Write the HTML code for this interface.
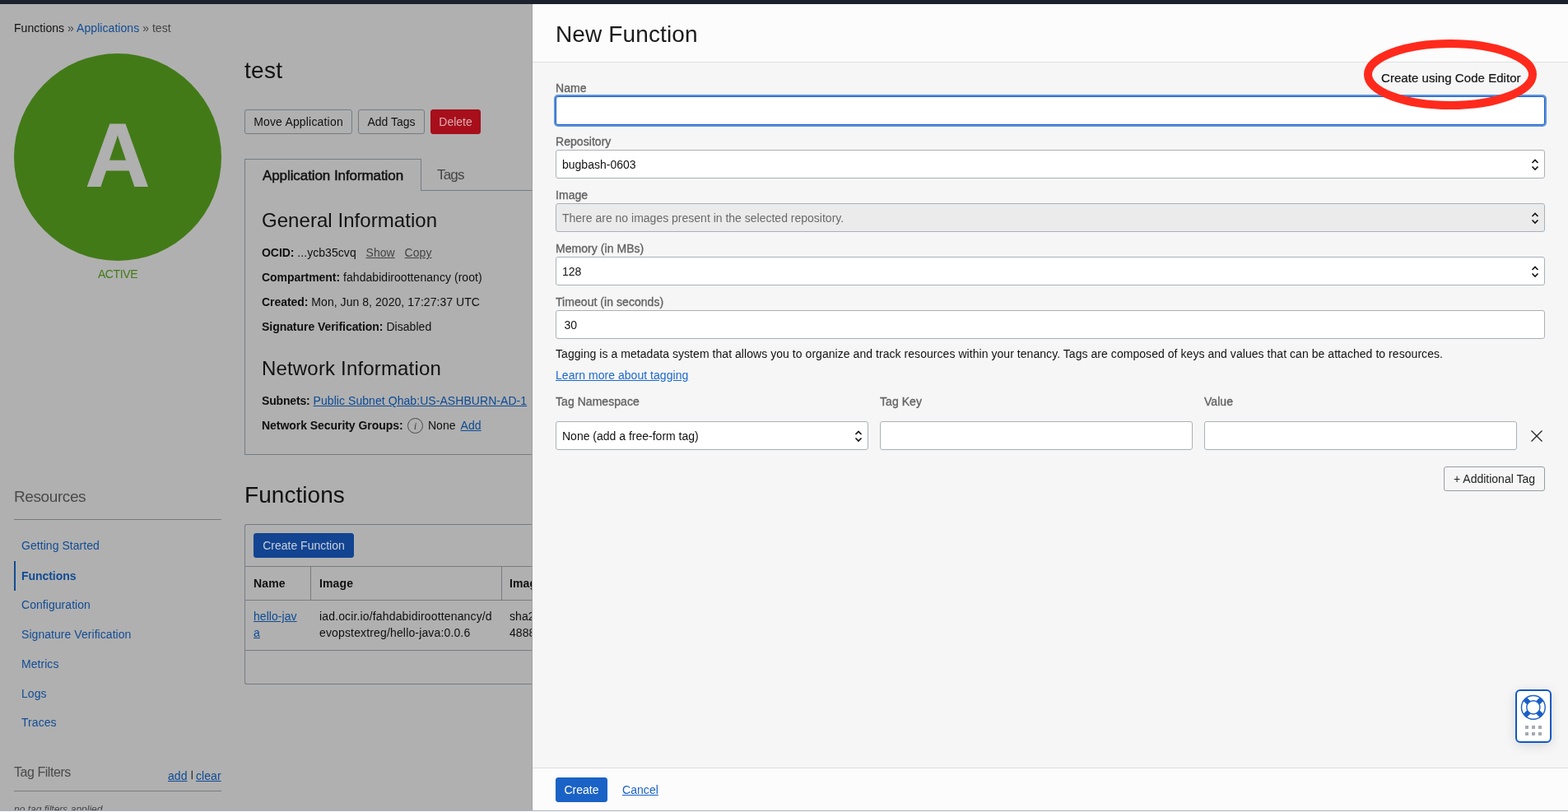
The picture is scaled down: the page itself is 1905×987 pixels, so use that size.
<!DOCTYPE html>
<html lang="en">
<head>
<meta charset="utf-8">
<title>New Function</title>
<style>
*{box-sizing:border-box;margin:0;padding:0}
html,body{width:1905px;height:987px;overflow:hidden;background:#fdfdfd}
body{position:relative;font-family:"Liberation Sans",Arial,Helvetica,sans-serif;font-size:14px;color:#0f0f0f;line-height:20px;letter-spacing:.05px}
.abs{position:absolute;white-space:nowrap}
.abs,.btn,.nav,.lbl,.fld{will-change:transform}
a{color:#0d4a93;text-decoration:underline}
#page{position:absolute;left:0;top:0;width:647px;height:985px;background:#b0b0b0;overflow:hidden}
#topbar{position:absolute;left:0;top:0;width:1905px;height:5px;background:#1c222d;z-index:5}
#bottomline{position:absolute;left:0;top:985px;width:1905px;height:1px;background:#adb1bb;z-index:5}
.btn{position:absolute;letter-spacing:0;height:30px;border:1px solid #767b82;border-radius:3px;background:#b0b0b0;color:#111;font-size:14px;line-height:28px;text-align:center;white-space:nowrap}
.h2{font-size:24px;line-height:28px;color:#111;font-weight:400}
.b{font-weight:700;letter-spacing:-.05px}
.nav{position:absolute;left:26px;color:#124c94;font-size:14px;white-space:nowrap}
#panel{position:absolute;left:647px;top:5px;width:1258px;height:980px;background:#f6f6f6;box-shadow:-1px 0 0 #a1a1a1}
#phead{position:absolute;left:0;top:0;width:100%;height:71px;background:#fcfcfc;border-bottom:1px solid #e1e1e1}
#pfoot{position:absolute;left:0;top:928px;width:100%;height:52px;background:#fcfcfc;border-top:1px solid #dedede}
.lbl{position:absolute;left:28px;font-size:14px;color:#626262;line-height:16px;white-space:nowrap;-webkit-text-stroke:.34px #626262;letter-spacing:.05px}
.fld{position:absolute;left:28px;width:1202px;height:35px;border:1px solid #aab0b9;border-radius:3px;background:#fff;font-size:14px;line-height:33px;padding:1px 0 0 7px;color:#111;white-space:nowrap;letter-spacing:0}
.chev{position:absolute;right:5px;top:8px;width:12px;height:18px}
</style>
</head>
<body>
<div id="page">
  <div class="abs" style="left:17px;top:24px;font-size:14px;color:#111">Functions <span style="color:#444">»</span> <span style="color:#124c94">Applications</span> <span style="color:#444">» test</span></div>
  <div class="abs" style="left:17px;top:65px;width:252px;height:252px;border-radius:50%;background:#437a18;color:#b0b0b0;font-weight:700;font-size:108.5px;line-height:248px;text-align:center;-webkit-text-stroke:1px #b0b0b0">A</div>
  <div class="abs" style="left:17px;top:323px;width:252px;text-align:center;color:#437a18;font-size:14px;letter-spacing:-.4px">ACTIVE</div>
  <div class="abs" style="left:297px;top:69px;font-size:28px;line-height:34px;color:#111;letter-spacing:.3px">test</div>
  <div class="btn" style="left:297px;top:133px;width:131px;letter-spacing:.18px">Move Application</div>
  <div class="btn" style="left:435px;top:133px;width:81px">Add Tags</div>
  <div class="btn" style="left:523px;top:133px;width:61px;background:#a70f1b;border-color:#a70f1b;color:#dcaeb2">Delete</div>

  <div class="abs" style="left:297px;top:231px;width:360px;height:322px;border:1px solid #767b82;border-right:0"></div>
  <div class="abs" style="left:297px;top:193px;width:215px;height:39px;border:1px solid #767b82;border-bottom:0;background:#b0b0b0;font-size:17px;line-height:40px;text-align:center;color:#111;-webkit-text-stroke:.45px #111;letter-spacing:-.08px">Application Information</div>
  <div class="abs" style="left:531px;top:203px;font-size:17px;color:#444;letter-spacing:-.8px">Tags</div>

  <div class="abs h2" style="left:318px;top:254px">General Information</div>
  <div class="abs" style="left:318px;top:297px"><span class="b">OCID:</span> ...ycb35cvq &nbsp; <a style="color:#444">Show</a> &nbsp; <a style="color:#444">Copy</a></div>
  <div class="abs" style="left:318px;top:327px"><span class="b">Compartment:</span> fahdabidiroottenancy (root)</div>
  <div class="abs" style="left:318px;top:357px"><span class="b">Created:</span> Mon, Jun 8, 2020, 17:27:37 UTC</div>
  <div class="abs" style="left:318px;top:387px"><span class="b">Signature Verification:</span> Disabled</div>
  <div class="abs h2" style="left:318px;top:434px;letter-spacing:.17px">Network Information</div>
  <div class="abs" style="left:318px;top:477px"><span class="b" style="letter-spacing:-.16px">Subnets:</span> <a style="letter-spacing:.06px">Public Subnet Qhab:US-ASHBURN-AD-1</a></div>
  <div class="abs" style="left:318px;top:507px"><span class="b">Network Security Groups:</span> <span style="display:inline-block;width:19px;height:19px;border:1px solid #4a4a4a;border-radius:50%;vertical-align:middle;text-align:center;line-height:17px;font-family:'Liberation Serif',serif;font-style:italic;font-size:13px;margin:-2px 2px 0 1.5px;color:#444">i</span> None <a style="margin-left:2px">Add</a></div>

  <div class="abs" style="left:17px;top:592px;font-size:19px;line-height:24px;color:#4a4a4a;letter-spacing:-.4px">Resources</div>
  <div class="abs" style="left:17px;top:631px;width:252px;height:1px;background:#767b82"></div>
  <div class="nav" style="top:653px">Getting Started</div>
  <div class="abs" style="left:17px;top:682px;width:2px;height:36px;background:#124c94"></div>
  <div class="nav b" style="top:690px">Functions</div>
  <div class="nav" style="top:725px">Configuration</div>
  <div class="nav" style="top:761px">Signature Verification</div>
  <div class="nav" style="top:797px">Metrics</div>
  <div class="nav" style="top:833px">Logs</div>
  <div class="nav" style="top:868px">Traces</div>
  <div class="abs" style="left:17px;top:928px;font-size:16px;line-height:22px;color:#4a4a4a;letter-spacing:-.45px">Tag Filters</div>
  <div class="abs" style="left:204px;top:933px;font-size:14px;color:#333"><a>add</a><span style="display:inline-block;width:10.5px;height:10px;line-height:10px;padding-left:1px;text-align:center;font-size:10.5px;position:relative;top:-3.2px;letter-spacing:0;color:#222;-webkit-text-stroke:.3px #222">|</span><a>clear</a></div>
  <div class="abs" style="left:17px;top:961px;width:252px;height:1px;background:#767b82"></div>
  <div class="abs" style="left:17px;top:974px;font-size:12px;font-style:italic;color:#444;letter-spacing:0">no tag filters applied</div>

  <div class="abs" style="left:297px;top:585px;font-size:28px;line-height:34px;color:#111">Functions</div>
  <div class="abs" style="left:297px;top:637px;width:360px;height:195px;border:1px solid #767b82;border-right:0;border-radius:3px 0 0 3px"></div>
  <div class="btn" style="left:308px;top:648px;width:122px;background:#124491;border-color:#124491;color:#c9d0dc">Create Function</div>
  <div class="abs" style="left:298px;top:688px;width:350px;height:1px;background:#767b82"></div>
  <div class="abs" style="left:298px;top:729px;width:350px;height:1px;background:#767b82"></div>
  <div class="abs" style="left:298px;top:790px;width:350px;height:1px;background:#767b82"></div>
  <div class="abs" style="left:377px;top:688px;width:1px;height:42px;background:#767b82"></div>
  <div class="abs" style="left:609px;top:688px;width:1px;height:42px;background:#767b82"></div>
  <div class="abs b" style="left:308px;top:699px;letter-spacing:.12px">Name</div>
  <div class="abs b" style="left:388px;top:699px;letter-spacing:.12px">Image</div>
  <div class="abs b" style="left:619px;top:699px;letter-spacing:.12px">Image Digest</div>
  <div class="abs" style="left:308px;top:739px"><a>hello-jav<br>a</a></div>
  <div class="abs" style="left:388px;top:739px;letter-spacing:.15px">iad.ocir.io/fahdabidiroottenancy/d<br>evopstextreg/hello-java:0.0.6</div>
  <div class="abs" style="left:619px;top:739px">sha256:<br>4888</div>
</div>

<div id="panel">
  <div id="phead"><div class="abs" style="left:28px;top:20px;font-size:28px;line-height:34px;color:#1a1a1a;letter-spacing:.12px">New Function</div></div>
  <div class="lbl" style="top:94px">Name</div>
  <div class="fld" style="top:112px;border-color:#1a5fc4;box-shadow:0 0 0 2px #5e94dc"></div>
  <div class="lbl" style="top:159px">Repository</div>
  <div class="fld" style="top:177px">bugbash-0603<svg class="chev" viewBox="0 0 12 18"><path d="M2.5 7 L6 3.5 L9.5 7 M2.5 11.5 L6 15 L9.5 11.5" fill="none" stroke="#111" stroke-width="1.6"/></svg></div>
  <div class="lbl" style="top:224px">Image</div>
  <div class="fld" style="top:242px;background:#ebebeb;color:#6a6a6a">There are no images present in the selected repository.<svg class="chev" viewBox="0 0 12 18"><path d="M2.5 7 L6 3.5 L9.5 7 M2.5 11.5 L6 15 L9.5 11.5" fill="none" stroke="#111" stroke-width="1.6"/></svg></div>
  <div class="lbl" style="top:289px">Memory (in MBs)</div>
  <div class="fld" style="top:307px">128<svg class="chev" viewBox="0 0 12 18"><path d="M2.5 7 L6 3.5 L9.5 7 M2.5 11.5 L6 15 L9.5 11.5" fill="none" stroke="#111" stroke-width="1.6"/></svg></div>
  <div class="lbl" style="top:354px">Timeout (in seconds)</div>
  <div class="fld" style="top:372px;padding-left:9.4px">30</div>
  <div class="abs" style="left:28px;top:415px;font-size:14px;color:#111">Tagging is a metadata system that allows you to organize and track resources within your tenancy. Tags are composed of keys and values that can be attached to resources.</div>
  <div class="abs" style="left:28px;top:441px;font-size:14px"><a style="color:#1b68ce;letter-spacing:.04px">Learn more about tagging</a></div>
  <div class="lbl" style="top:475px">Tag Namespace</div>
  <div class="lbl" style="top:475px;left:422px">Tag Key</div>
  <div class="lbl" style="top:475px;left:816px">Value</div>
  <div class="fld" style="top:507px;width:380px">None (add a free-form tag)<svg class="chev" viewBox="0 0 12 18"><path d="M2.5 7 L6 3.5 L9.5 7 M2.5 11.5 L6 15 L9.5 11.5" fill="none" stroke="#111" stroke-width="1.6"/></svg></div>
  <div class="fld" style="top:507px;left:422px;width:380px;height:35px"></div>
  <div class="fld" style="top:507px;left:816px;width:380px;height:35px"></div>
  <svg class="abs" style="left:1212px;top:517px" width="16" height="16" viewBox="0 0 16 16"><path d="M1.5 1.5 L14.5 14.5 M14.5 1.5 L1.5 14.5" stroke="#222" stroke-width="1.3" fill="none"/></svg>
  <div class="btn" style="left:1107px;top:562px;width:123px;background:#f6f6f6;border-color:#979da5;color:#222">+ Additional Tag</div>
  <div class="abs" style="left:1031px;top:80px;color:#111;font-size:15px;-webkit-text-stroke:.2px #111">Create using Code Editor</div>
  <svg class="abs" style="left:1000px;top:35px" width="230" height="100" viewBox="0 0 230 100"><ellipse cx="115" cy="50.5" rx="100" ry="37.5" fill="none" stroke="#ff2a1c" stroke-width="10"/></svg>
  <div class="abs" style="left:1194px;top:833px;width:44px;height:65px;border:2px solid #1059c2;border-radius:6px;background:#fff;box-shadow:0 3px 14px rgba(0,0,0,.13)">
    <svg width="40" height="61" viewBox="0 0 40 61" style="display:block">
      <defs><clipPath id="ring"><path clip-rule="evenodd" d="M19.85 5.2a14.65 14.65 0 1 0 0 29.3a14.65 14.65 0 1 0 0-29.3zM19.85 11.85a8 8 0 1 1 0 16a8 8 0 1 1 0-16z"/></clipPath></defs>
      <g clip-path="url(#ring)" stroke="#1a5fc6" stroke-width="6" fill="none"><path d="M5 5 L35 35 M35 5 L5 35" transform="translate(-.15 -.15)"/></g>
      <circle cx="19.85" cy="19.85" r="14.4" fill="none" stroke="#1a5fc6" stroke-width="1.4"/>
      <circle cx="19.85" cy="19.85" r="8.1" fill="none" stroke="#1a5fc6" stroke-width="1.4"/>
      <g fill="#a4aab4"><rect x="10" y="42" width="4" height="4"/><rect x="18" y="42" width="4" height="4"/><rect x="26" y="42" width="4" height="4"/><rect x="10" y="50" width="4" height="4"/><rect x="18" y="50" width="4" height="4"/><rect x="26" y="50" width="4" height="4"/></g>
    </svg>
  </div>
  <div id="pfoot">
    <div class="btn" style="left:28px;top:11px;width:63px;background:#1a62c6;border-color:#1a62c6;color:#fff">Create</div>
    <div class="abs" style="left:108.5px;top:16px;font-size:14px"><a style="color:#1a62c6">Cancel</a></div>
  </div>
</div>
<div id="topbar"></div>
<div id="bottomline"></div>
</body>
</html>
